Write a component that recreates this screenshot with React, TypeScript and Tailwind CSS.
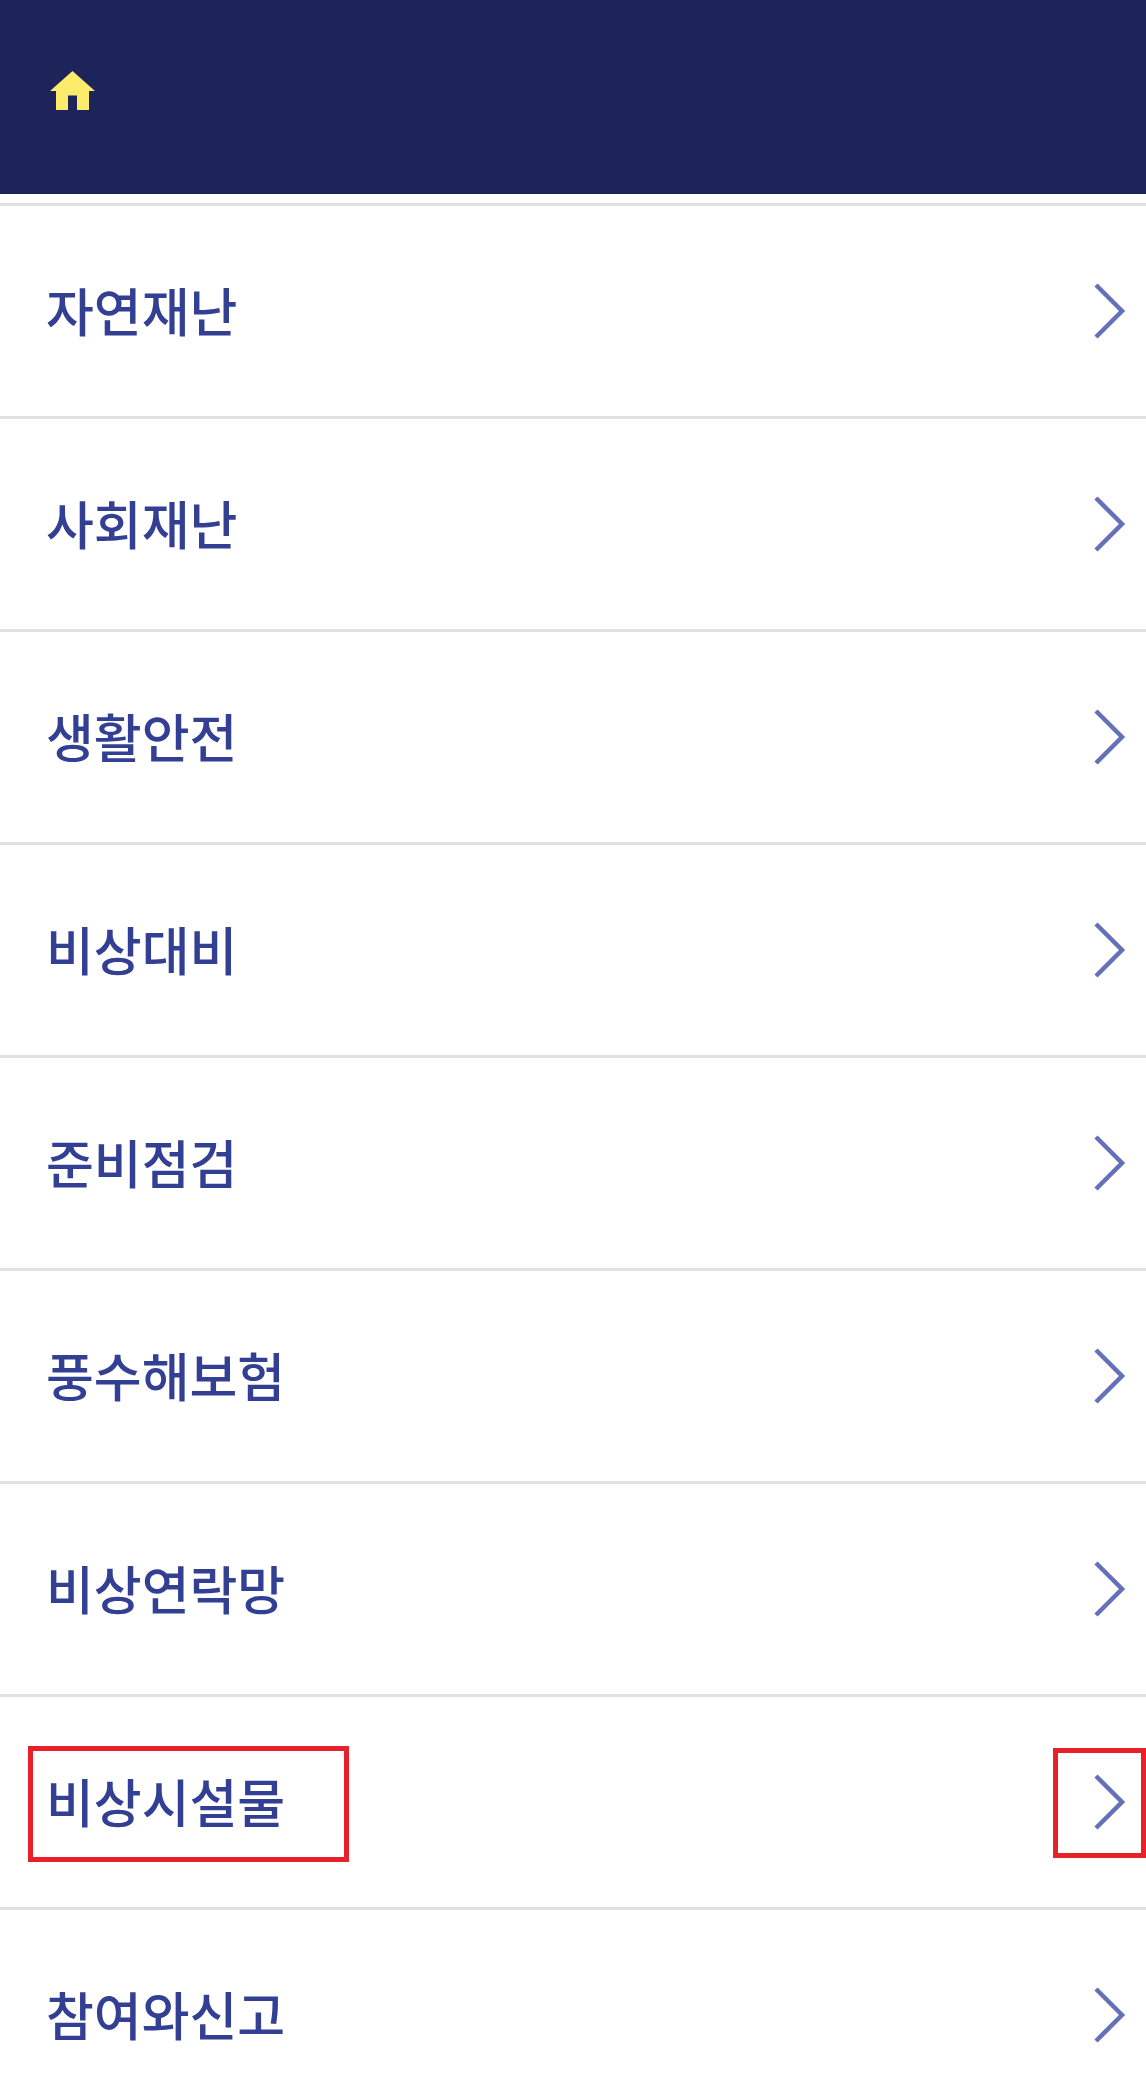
const menuItems = ['자연재난', '사회재난', '생활안전', '비상대비', '준비점검', '풍수해보험', '비상연락망', '비상시설물', '참여와신고'];

function HomeIcon() {
  return (
    <svg width="45" height="39" viewBox="0 0 45 39" fill="none">
      <path d="M22.5 0 L45 20 H39 V39 H27 V24.5 H18 V39 H6 V20 H0 Z" fill="#fdeb6c" />
    </svg>
  );
}

function Chevron() {
  return (
    <svg width="32" height="56" viewBox="0 0 32 56" fill="none">
      <path d="M2 2 L28 28 L2 54" stroke="#6470ba" strokeWidth="4.5" strokeLinecap="butt" />
    </svg>
  );
}

export default function App() {
  return (
    <div className="h-[2084px] w-full overflow-hidden bg-white font-['Noto_Sans_CJK_KR','Noto_Sans',sans-serif]">
      <header className="flex h-[194px] items-center bg-[#1c2459] pb-[13px] pl-[50px]">
        <HomeIcon />
      </header>
      <nav className="mt-[9px]">
        <ul>
          {menuItems.map((item) => (
            <li key={item} className="relative flex h-[213px] items-center justify-between border-t-[3px] border-[#e0e0e0] pl-[46px] pr-[20px]">
              <span className="mb-[3px] text-[52px] font-medium leading-none text-[#323f93]">{item}</span>
              <Chevron />
              {item === '비상시설물' && (
                <>
                  <div className="absolute left-[28px] top-[49px] h-[116px] w-[321px] border-[5px] border-[#e8202a]" />
                  <div className="absolute right-0 top-[51px] h-[110px] w-[93px] border-[5px] border-[#e8202a]" />
                </>
              )}
            </li>
          ))}
        </ul>
      </nav>
    </div>
  );
}
